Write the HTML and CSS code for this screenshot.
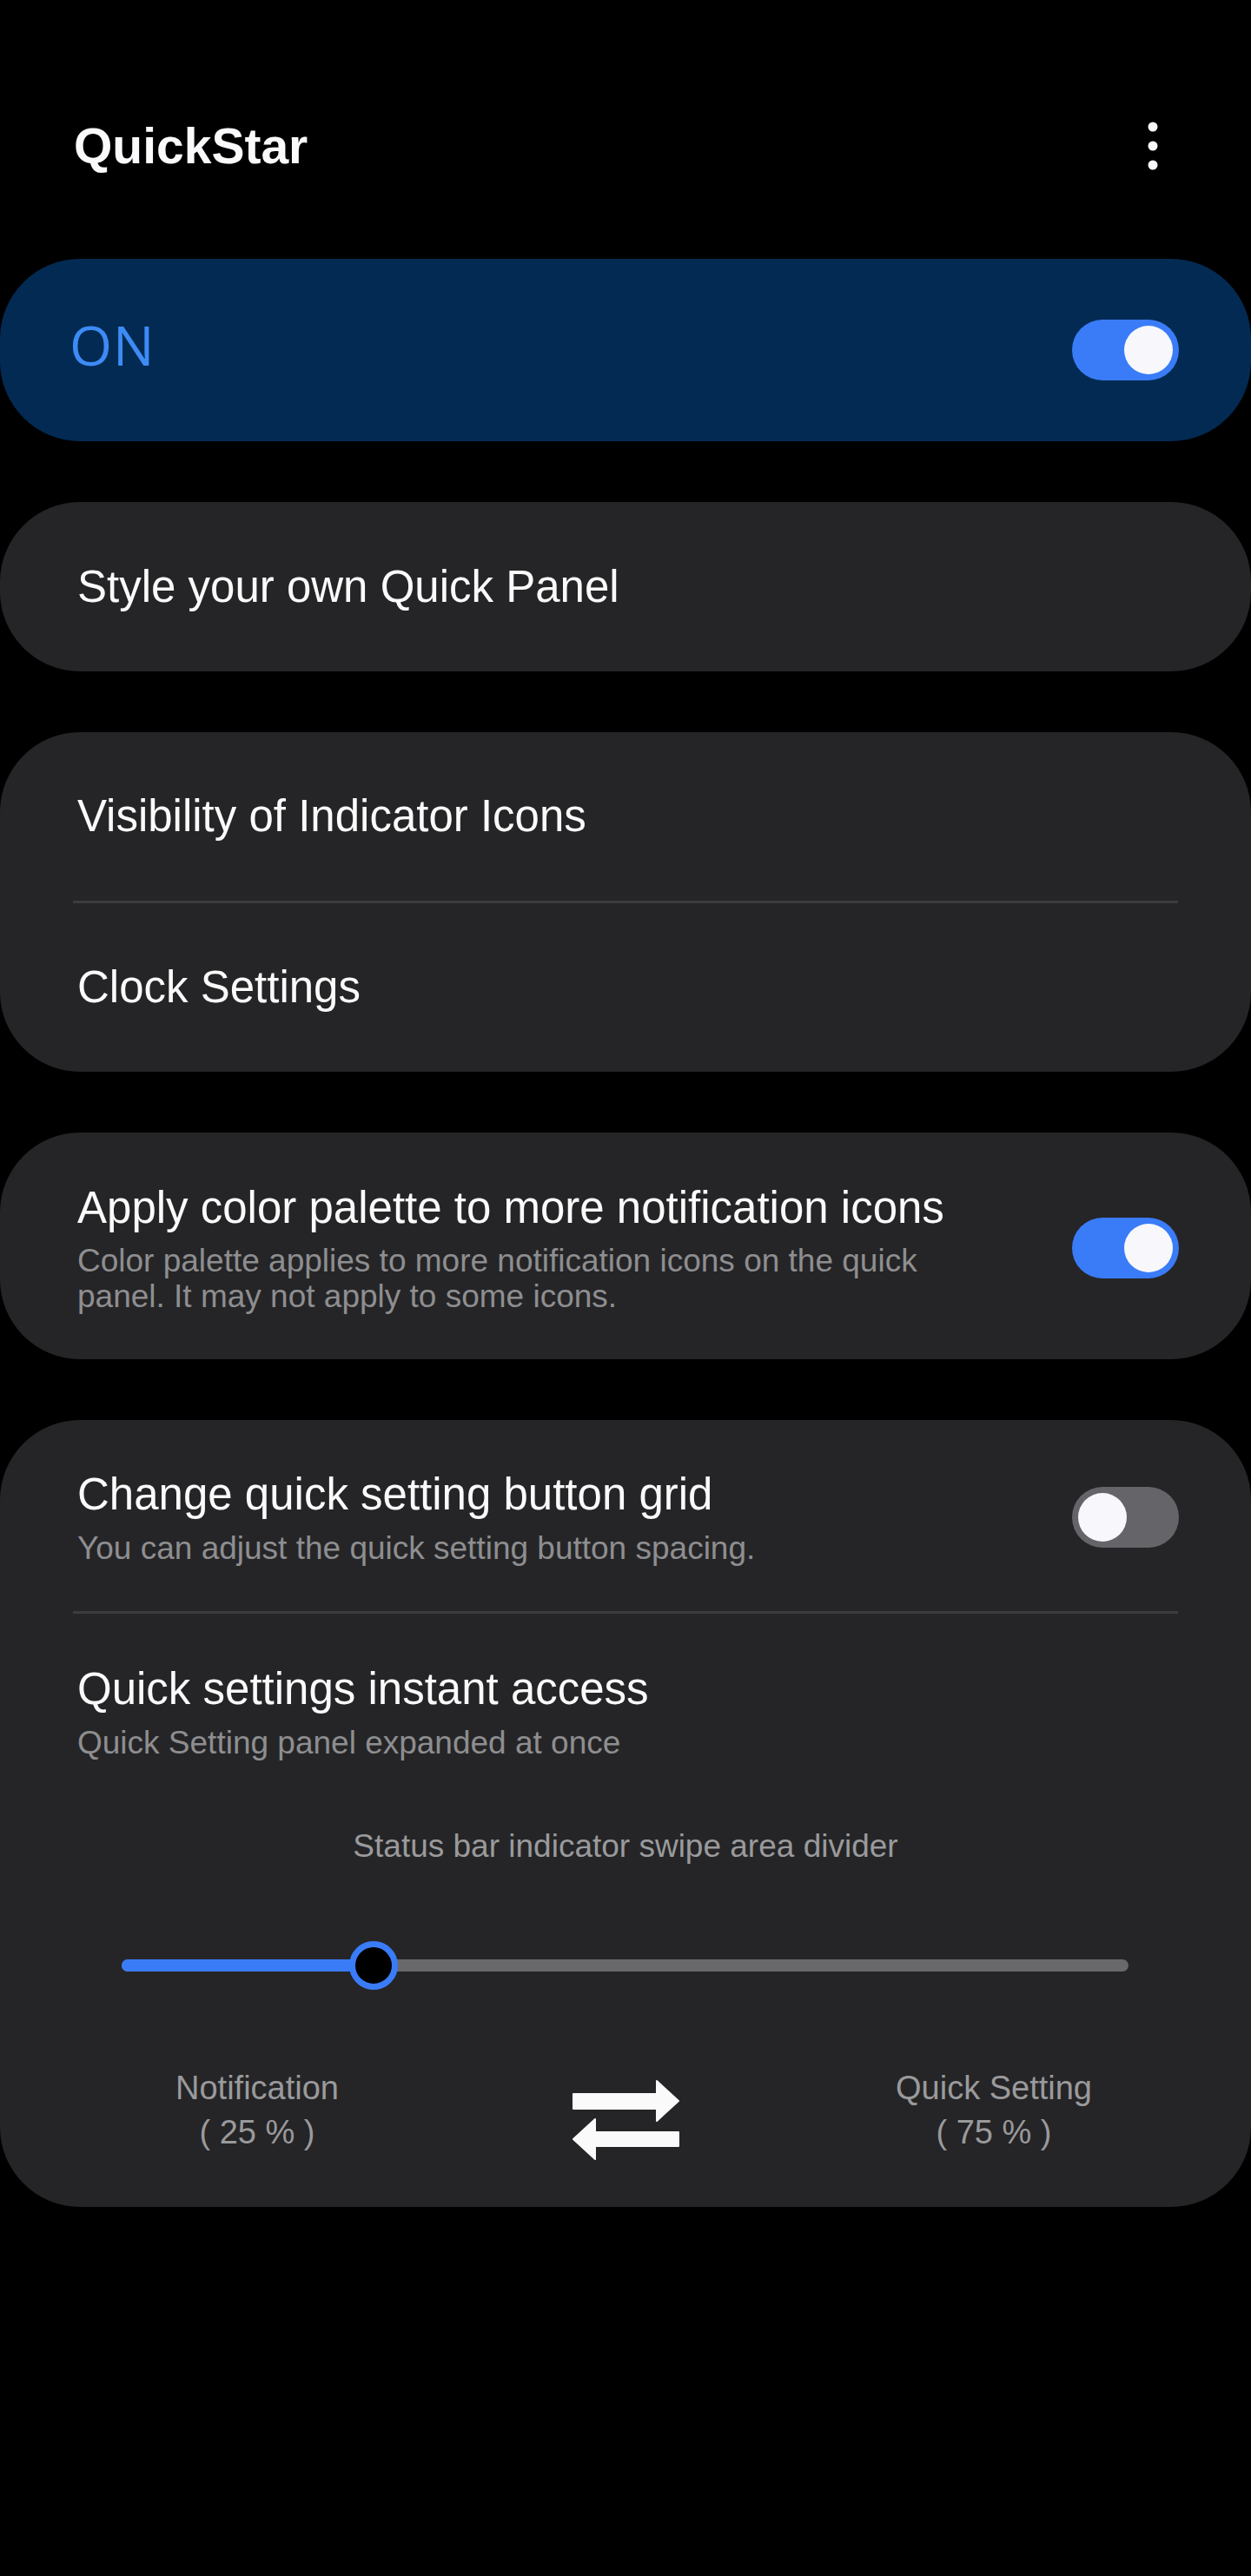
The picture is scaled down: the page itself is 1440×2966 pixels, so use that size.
FILE: index.html
```html
<!DOCTYPE html>
<html lang="en">
<head>
  <meta charset="UTF-8" />
  <meta name="viewport" content="width=device-width, initial-scale=1.0" />
  <title>QuickStar</title>
  <link rel="stylesheet" href="styles.css">
</head>
<body>
  <div class="page">
    <header class="app-bar">
      <h1 class="app-title">QuickStar</h1>
      <button class="more-btn" aria-label="More options">
        <svg width="12" height="56" viewBox="0 0 12 56">
          <circle cx="6" cy="6" r="5.5" fill="#f8f8fc" />
          <circle cx="6" cy="28" r="5.5" fill="#f8f8fc" />
          <circle cx="6" cy="50" r="5.5" fill="#f8f8fc" />
        </svg>
      </button>
    </header>

    <section class="card master-card">
      <span class="master-label">ON</span>
      <span class="switch on"><span class="knob"></span></span>
    </section>

    <section class="card">
      <div class="row">
        <span class="title">Style your own Quick Panel</span>
      </div>
    </section>

    <section class="card">
      <div class="row">
        <span class="title">Visibility of Indicator Icons</span>
      </div>
      <div class="divider"></div>
      <div class="row">
        <span class="title">Clock Settings</span>
      </div>
    </section>

    <section class="card">
      <div class="row row-detail palette-row">
        <div class="text-block">
          <div class="title">Apply color palette to more notification icons</div>
          <div class="summary">Color palette applies to more notification icons on the quick panel. It may not apply to some icons.</div>
        </div>
        <span class="switch on"><span class="knob"></span></span>
      </div>
    </section>

    <section class="card">
      <div class="row row-detail grid-row">
        <div class="text-block">
          <div class="title">Change quick setting button grid</div>
          <div class="summary">You can adjust the quick setting button spacing.</div>
        </div>
        <span class="switch"><span class="knob"></span></span>
      </div>
      <div class="divider"></div>
      <div class="instant">
        <div class="title">Quick settings instant access</div>
        <div class="summary">Quick Setting panel expanded at once</div>

        <div class="caption">Status bar indicator swipe area divider</div>

        <div class="slider">
          <div class="track">
            <div class="track-fill" style="width: 25%"></div>
          </div>
          <div class="thumb" style="left: 25%"></div>
        </div>

        <div class="split">
          <div class="split-label">Notification<br>( 25 % )</div>
          <svg class="swap-icon" width="123" height="92" viewBox="0 0 123 92">
            <path d="M1 16 H97 V1 L122 24 L97 47 V33 H1 Z" fill="#fafafa" stroke="#fafafa" stroke-width="2" stroke-linejoin="round" />
            <path d="M122 60 H26 V45 L1 68 L26 91 V76 H122 Z" fill="#fafafa" stroke="#fafafa" stroke-width="2" stroke-linejoin="round" />
          </svg>
          <div class="split-label">Quick Setting<br>( 75 % )</div>
        </div>
      </div>
    </section>
  </div>
</body>
</html>
```

FILE: styles.css
```css
body {
  margin: 0;
  background: #000;
  font-family: "Liberation Sans", Arial, sans-serif;
  color: #fafafa;
}

.page {
  width: 1440px;
  min-height: 2966px;
  padding-top: 133px;
  box-sizing: border-box;
  background: #000;
}

.app-bar {
  display: flex;
  align-items: center;
  justify-content: space-between;
  height: 70px;
  padding: 0 84px 0 85px;
}

.app-title {
  margin: 0;
  font-size: 57px;
  line-height: 70px;
  font-weight: bold;
  color: #fafafc;
}

.more-btn {
  background: none;
  border: none;
  padding: 0 23px;
  margin-top: 0;
  display: flex;
}

.card {
  background: #252527;
  border-radius: 92px;
  margin-bottom: 70px;
  overflow: hidden;
}

.master-card {
  margin-top: 95px;
  height: 210px;
  background: #032a52;
  display: flex;
  align-items: center;
  justify-content: space-between;
  padding: 0 83px 0 80px;
  box-sizing: border-box;
}

.master-label {
  font-family: "Open Sans", "Liberation Sans", sans-serif;
  font-weight: 400;
  font-size: 63px;
  letter-spacing: 1px;
  color: #3d8bf6;
  margin-bottom: 14px;
}

.switch {
  position: relative;
  flex-shrink: 0;
  width: 123px;
  height: 70px;
  border-radius: 35px;
  background: #656569;
}

.switch .knob {
  position: absolute;
  top: 7px;
  left: 7px;
  width: 56px;
  height: 56px;
  border-radius: 50%;
  background: #f8f8fc;
}

.switch.on {
  background: #3a7cf8;
}

.switch.on .knob {
  left: auto;
  right: 7px;
}

.row {
  display: flex;
  align-items: center;
  justify-content: space-between;
  min-height: 194px;
  padding: 0 83px 0 89px;
  box-sizing: border-box;
}

.card:nth-child(3) .row {
  min-height: 195px;
}

.title {
  font-size: 51px;
  line-height: 60px;
  color: #fafafa;
}

.summary {
  font-size: 37px;
  line-height: 41px;
  color: #8e8e90;
  margin-top: 11px;
}

.row-detail {
  min-height: 0;
}

.palette-row {
  padding-top: 57px;
  padding-bottom: 52px;
}

.palette-row .summary {
  margin-top: 10px;
}

.grid-row {
  padding-top: 56px;
  padding-bottom: 52px;
}

.text-block {
  max-width: 1040px;
}

.divider {
  height: 3px;
  margin: 0 84px;
  background: #3c3c3e;
}

.instant {
  padding: 57px 0 54px;
}

.instant > .title,
.instant > .summary {
  padding-left: 89px;
}

.caption {
  margin-top: 78px;
  text-align: center;
  font-size: 37px;
  line-height: 41px;
  color: #9a9a9c;
}

.slider {
  position: relative;
  height: 56px;
  margin: 89px 141px 0 140px;
  display: flex;
  align-items: center;
}

.track {
  width: 100%;
  height: 14px;
  border-radius: 7px;
  background: #69696b;
  overflow: hidden;
}

.track-fill {
  height: 100%;
  background: #3a7cf8;
}

.thumb {
  position: absolute;
  top: 0;
  width: 42px;
  height: 42px;
  margin-left: -28px;
  border: 7px solid #3a7cf8;
  border-radius: 50%;
  background: #000;
}

.split {
  display: grid;
  grid-template-columns: repeat(3, 1fr);
  margin-top: 88px;
  padding: 0 84px;
}

.split-label {
  text-align: center;
  font-size: 38px;
  line-height: 51px;
  color: #9a9a9c;
}

.swap-icon {
  justify-self: center;
  margin-top: 16px;
}
```
